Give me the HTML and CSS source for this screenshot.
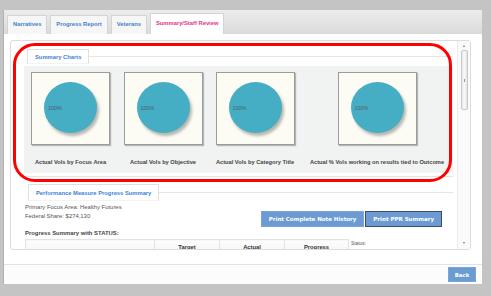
FILE: index.html
```html
<!DOCTYPE html>
<html lang="en">
<head>
    <meta charset="UTF-8">
    <meta name="viewport" content="width=device-width, initial-scale=1.0">
    <title>Summary/Staff Review</title>
    <link rel="stylesheet" href="styles.css">
</head>
<body>

    <div class="frame">
        <!-- tabs -->
        <div class="tabbar">
            <a class="tab">Narratives</a>
            <a class="tab">Progress Report</a>
            <a class="tab">Veterans</a>
            <a class="tab active">Summary/Staff Review</a>
        </div>

        <div class="content">
            <div class="scroll">
                <div class="scroll-body">

                    <!-- Summary charts -->
                    <div class="section charts">
                        <div class="section-head"><span class="section-tab">Summary Charts</span></div>
                        <div class="chart-row">
                            <div class="chart">
                                <div class="chart-box"><div class="pie"><span>100%</span></div></div>
                                <p>Actual Vols by Focus Area</p>
                            </div>
                            <div class="chart">
                                <div class="chart-box"><div class="pie"><span>100%</span></div></div>
                                <p>Actual Vols by Objective</p>
                            </div>
                            <div class="chart">
                                <div class="chart-box"><div class="pie"><span>100%</span></div></div>
                                <p>Actual Vols by Category Title</p>
                            </div>
                            <div class="chart">
                                <div class="chart-box"><div class="pie"><span>100%</span></div></div>
                                <p>Actual % Vols working on results tied to Outcome</p>
                            </div>
                        </div>
                    </div>

                    <!-- Performance measures -->
                    <div class="section perf">
                        <div class="section-head"><span class="section-tab">Performance Measure Progress Summary</span></div>
                        <div class="perf-info">
                            <div class="facts">
                                <p>Primary Focus Area: Healthy Futures</p>
                                <p>Federal Share: $274,130</p>
                            </div>
                            <div class="actions">
                                <button class="btn">Print Complete Note History</button>
                                <button class="btn focused">Print PPR Summary</button>
                            </div>
                        </div>
                        <h4>Progress Summary with STATUS:</h4>
                        <table class="status-table">
                            <tr>
                                <th class="blank"></th>
                                <th>Target</th>
                                <th>Actual</th>
                                <th>Progress</th>
                                <td class="status">Status:</td>
                            </tr>
                        </table>
                    </div>

                </div>
                <div class="scrollbar">
                    <span class="arrow up"></span>
                    <span class="thumb"></span>
                    <span class="arrow down"></span>
                </div>
            </div>
        </div>

        <div class="footer">
            <button class="back">Back</button>
        </div>
    </div>

    <!-- red callout drawn over the charts -->
    <div class="highlight"></div>

</body>
</html>
```

FILE: styles.css
```css
body {
    margin: 0;
    width: 491px;
    height: 296px;
    overflow: hidden;
    background-color: #c4c4c4;
    font-family: "Liberation Sans", Arial, sans-serif;
    position: relative;
}
.frame {
    margin: 10px 0 0 3px;
    width: 479px;
    background-color: #fff;
    border-left: 1px solid #b0b0b0;
    box-sizing: border-box;
}
.tabbar {
    height: 24px;
    display: flex;
    align-items: flex-end;
    gap: 3px;
    padding-left: 3px;
    background: linear-gradient(#ececec, #dadada);
}
.tab {
    height: 19px;
    line-height: 17px;
    padding: 0 5px;
    font-size: 5.8px;
    font-weight: bold;
    color: #3f7fd0;
    background-color: #f6f6f6;
    border: 1px solid #d4d4d4;
    border-bottom: none;
    box-sizing: border-box;
}
.tab.active {
    height: 21px;
    line-height: 19px;
    color: #e4338c;
    background-color: #fff;
}
.content {
    height: 231px;
    padding: 6px 11px 0 6px;
    box-sizing: border-box;
    border-bottom: 1px solid #e2e2e2;
}
.scroll {
    height: 210px;
    display: flex;
    border: 1px solid #dcdcdc;
    border-radius: 3px;
    box-sizing: border-box;
}
.scroll-body {
    flex: 1;
    overflow: hidden;
    padding: 8px 4px 0 13px;
}
.scrollbar {
    width: 12px;
    position: relative;
    display: flex;
    flex-direction: column;
    align-items: center;
    background-color: #fafafa;
    border-left: 1px solid #ececec;
}
.arrow {
    width: 0;
    height: 0;
    border-left: 1.5px solid transparent;
    border-right: 1.5px solid transparent;
    margin-top: 4px;
}
.arrow.up {
    border-bottom: 2px solid #777;
}
.arrow.down {
    border-top: 2px solid #777;
    margin-top: auto;
    margin-bottom: 5px;
}
.thumb {
    width: 7px;
    height: 60px;
    margin-top: 3px;
    background: linear-gradient(90deg, #e9e9e9, #f8f8f8, #e2e2e2);
    border: 1px solid #c8c8c8;
    border-radius: 2px;
    box-sizing: border-box;
    position: relative;
}
.thumb::after {
    content: "";
    position: absolute;
    left: 2px;
    top: 28px;
    width: 1px;
    height: 3px;
    background-color: #999;
}
.section-head {
    display: flex;
    align-items: center;
    padding-left: 3px;
}
.section-head::after {
    content: "";
    flex: 1;
    border-top: 1px solid #e6e6e6;
}
.section-tab {
    padding: 0 7px;
    font-size: 5.8px;
    font-weight: bold;
    color: #3d82d8;
    background-color: #fff;
    border: 1px solid #e0e0e0;
    border-bottom-color: #f3f3f3;
}
.charts .section-tab {
    height: 15px;
    line-height: 15px;
    box-sizing: border-box;
}
.charts {
    padding-bottom: 3px;
    border-bottom: 1px solid #e4e4e4;
}
.chart-row {
    margin-top: 2px;
    display: grid;
    grid-template-columns: 93px 92px 92px 1fr;
    padding: 6px 0 7px;
    background-color: #f1f2f2;
}
.chart {
    display: flex;
    flex-direction: column;
    align-items: center;
}
.chart-box {
    width: 79px;
    height: 73px;
    display: flex;
    align-items: center;
    justify-content: center;
    background-color: #fcfbf4;
    border: 1px solid #9c9c9c;
    box-shadow: 1px 1px 1px rgba(0, 0, 0, 0.25);
    box-sizing: border-box;
}
.pie {
    width: 53px;
    height: 51px;
    margin-top: -2px;
    border-radius: 50%;
    background-color: #45adc4;
    box-shadow: 2px 3px 3px rgba(0, 0, 0, 0.28);
    display: flex;
    align-items: center;
    padding-left: 4px;
    box-sizing: border-box;
}
.pie span {
    font-size: 5.4px;
    color: #4d5e68;
}
.chart p {
    margin: 13px 0 0;
    font-size: 5.7px;
    line-height: 8px;
    font-weight: bold;
    color: #444;
    white-space: nowrap;
}
.perf {
    margin-top: 7px;
    padding-left: 1px;
}
.perf .section-tab {
    height: 17px;
    line-height: 17px;
    box-sizing: border-box;
}
.perf-info {
    display: flex;
    justify-content: space-between;
    padding: 2px 11px 0 0;
}
.facts p {
    margin: 0;
    font-size: 5.9px;
    line-height: 9px;
    color: #555;
}
.actions {
    display: flex;
    margin-top: 8px;
}
.btn {
    height: 16px;
    padding: 0 7px;
    font-family: "DejaVu Sans", Verdana, sans-serif;
    font-size: 5.5px;
    font-weight: bold;
    color: #fff;
    background-color: #6b9bd2;
    border: 1px solid #7aa6d8;
}
.btn.focused {
    margin-left: 1px;
    border-color: #3f4f63;
}
.perf h4 {
    margin: 2px 0 0;
    font-size: 5.9px;
    line-height: 8px;
    color: #444;
}
.status-table {
    margin-top: 2px;
    width: 424px;
    border-collapse: collapse;
    table-layout: fixed;
}
.status-table th {
    height: 16px;
    padding: 2px 0 0;
    font-size: 5.8px;
    color: #333;
    background: linear-gradient(#fdfdfd, #f1f1f1);
    border: 1px solid #e2e2e2;
    vertical-align: top;
    line-height: 10px;
}
.status-table th.blank {
    width: 128px;
}
.status-table th:nth-child(2) { width: 64px; }
.status-table th:nth-child(3) { width: 64px; }
.status-table th:nth-child(4) { width: 63px; }
.status-table .status {
    padding: 1px 0 0 2px;
    font-size: 4.8px;
    color: #555;
    vertical-align: top;
    background-color: #fff;
}
.footer {
    height: 19px;
    display: flex;
    justify-content: flex-end;
    align-items: center;
    padding-right: 6px;
    background-color: #fcfcfc;
}
.back {
    width: 28px;
    height: 15px;
    padding: 0;
    font-family: "DejaVu Sans", Verdana, sans-serif;
    font-size: 5.4px;
    font-weight: bold;
    color: #fff;
    background-color: #6a9bd1;
    border: 1px solid #7aa7d9;
}
.highlight {
    position: absolute;
    left: 13px;
    top: 43px;
    width: 439px;
    height: 139px;
    border: 3px solid #f00;
    border-radius: 22px;
    box-sizing: border-box;
}
```
